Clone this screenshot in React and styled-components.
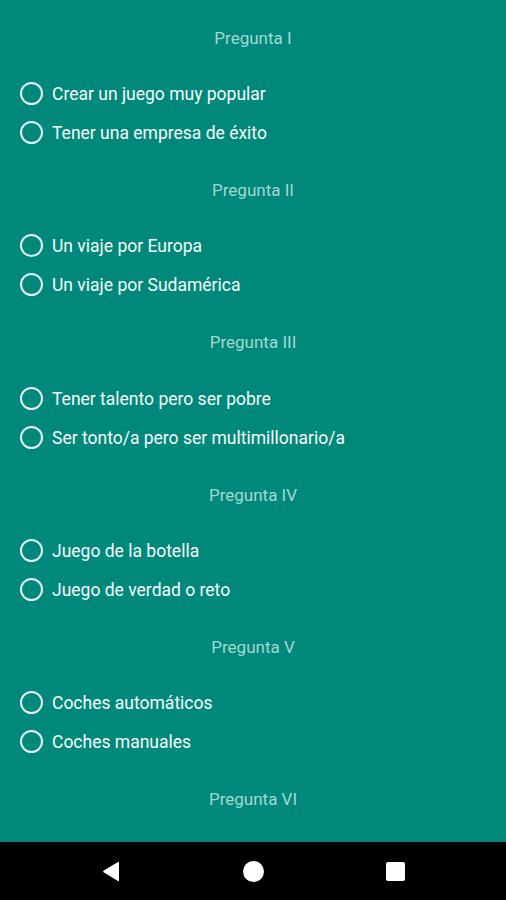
import React from 'react';
import styled, {createGlobalStyle} from 'styled-components';

const questions=[
  {title:'Pregunta I',options:['Crear un juego muy popular','Tener una empresa de éxito']},
  {title:'Pregunta II',options:['Un viaje por Europa','Un viaje por Sudamérica']},
  {title:'Pregunta III',options:['Tener talento pero ser pobre','Ser tonto/a pero ser multimillonario/a']},
  {title:'Pregunta IV',options:['Juego de la botella','Juego de verdad o reto']},
  {title:'Pregunta V',options:['Coches automáticos','Coches manuales']},
  {title:'Pregunta VI',options:[]},
];

function App() {
  return (
    <>
    <GlobalStyle/>
    <Screen>
      <Content>
        {questions.map((q)=>(
          <Block key={q.title}>
            <Title>{q.title}</Title>
            {q.options.length>0 && (
            <Options>
              {q.options.map((opt)=>(
                <Option key={opt}>
                  <Radio/>
                  <Label>{opt}</Label>
                </Option>
              ))}
            </Options>
            )}
          </Block>
        ))}
      </Content>
      <NavBar>
        <NavButton>
          <svg width="18" height="21" viewBox="0 0 18 21">
            <path d="M17 1.5 L17 19.5 Q17 20.5 16 20 L1.5 11.2 Q0.6 10.5 1.5 9.8 L16 1 Q17 0.5 17 1.5 Z" fill="#fff"/>
          </svg>
        </NavButton>
        <NavButton>
          <Dot/>
        </NavButton>
        <NavButton>
          <Square/>
        </NavButton>
      </NavBar>
    </Screen>
    </>
  );
}

const GlobalStyle=createGlobalStyle`
html,body{
  margin:0;
  padding:0;
  background:#00897b;
}
body{
  font-family:Roboto,"Noto Sans",sans-serif;
}
`;
const Screen=styled.div`
width:506px;
height:900px;
display:flex;
flex-direction:column;
overflow:hidden;
`;
const Content=styled.div`
flex:1;
overflow:hidden;
background:#00897b;
display:flex;
flex-direction:column;
`;
const Block=styled.section`
display:flex;
flex-direction:column;
flex-shrink:0;
`;
const Title=styled.div`
margin-top:18px;
height:40px;
line-height:40px;
text-align:center;
font-size:17px;
color:#a3d8cf;
`;
const Options=styled.div`
margin-top:16.2px;
display:flex;
flex-direction:column;
`;
const Option=styled.div`
height:39px;
display:flex;
align-items:center;
padding-left:20px;
`;
const Radio=styled.span`
box-sizing:border-box;
width:23px;
height:23px;
border-radius:50%;
border:2px solid #e3f1ee;
margin-right:9px;
flex-shrink:0;
`;
const Label=styled.span`
font-size:17.5px;
line-height:20px;
padding-top:1px;
color:#f7fbfa;
`;
const NavBar=styled.nav`
height:58px;
flex-shrink:0;
background:#000;
display:flex;
justify-content:center;
align-items:center;
gap:82px;
`;
const NavButton=styled.div`
width:60px;
height:58px;
display:flex;
align-items:center;
justify-content:center;
`;
const Dot=styled.div`
width:21px;
height:21px;
border-radius:50%;
background:#fff;
`;
const Square=styled.div`
width:19px;
height:19px;
border-radius:2px;
background:#fff;
`;
export default App;
